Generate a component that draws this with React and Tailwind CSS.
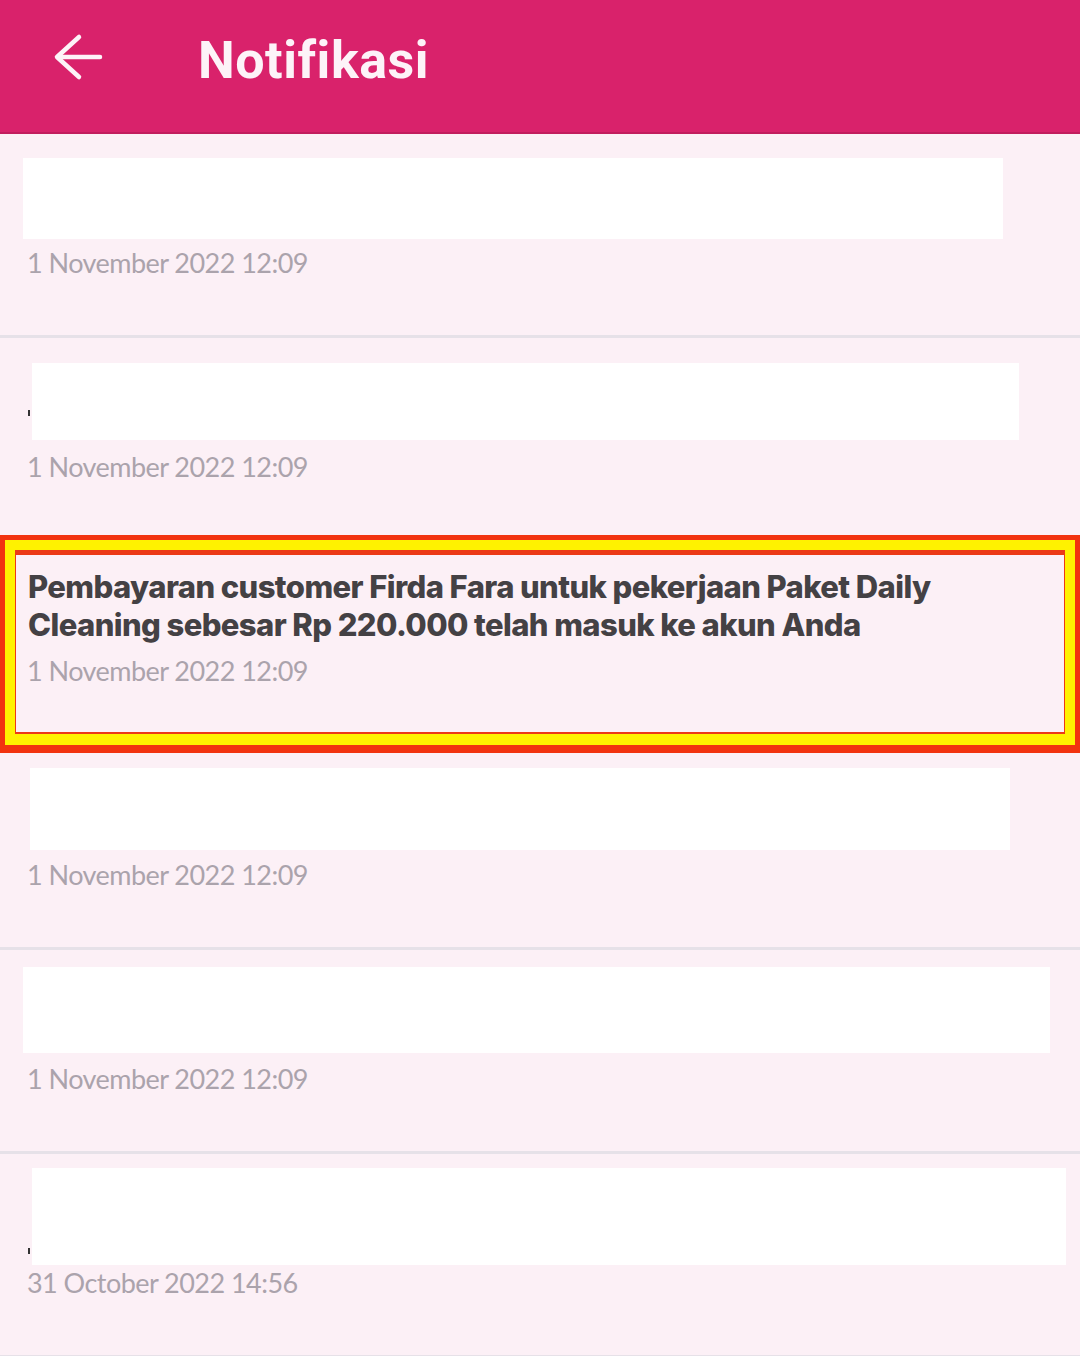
import { useState } from "react";

const items = [
  { date: "1 November 2022 12:09", mask: "mt-[-2px] ml-[-5px] w-[980px] h-[81px]" },
  { date: "1 November 2022 12:09", mask: "mt-[-1px] ml-[2px] w-[987px] h-[77px]", nub: "mt-[46px]" },
  { date: "1 November 2022 12:09", highlight: true },
  { date: "1 November 2022 12:09", mask: "mt-[-4px] ml-[2px] w-[980px] h-[82px]" },
  { date: "1 November 2022 12:09", mask: "mt-[-9px] ml-[-5px] w-[1027px] h-[86px]" },
  { date: "31 October 2022 14:56", mask: "mt-[-12px] ml-[2px] w-[1034px] h-[97px]", nub: "mt-[68px]" },
];

const BackArrow = () => (
  <svg width="50" height="48" viewBox="0 0 50 48" fill="none" stroke="currentColor" strokeWidth="4.5" strokeLinecap="round" strokeLinejoin="round">
    <path d="M47 24H5" />
    <path d="M26 4 4 24l22 20" />
  </svg>
);

const NotifItem = ({ item }) => {
  return (
    <div className="relative h-[204px] border-b-[3px] border-[#e6e1e8] pl-[28px] pt-[26px]">
      {item.highlight && (
        <div className="absolute left-0 right-0 top-[-7px] bottom-[-10px] border-x-[5px] border-t-[5px] border-b-[8px] border-[#f2330f] pointer-events-none">
          <div className="h-full border-[10px] border-b-[11px] border-[#fff200]">
            <div className="h-full border-t-[5px] border-b-[2px] border-x-[1px] border-[#ec3a17]" />
          </div>
        </div>
      )}
      <div className="h-[76px]">
        {item.highlight ? (
          <p className="text-[31px] leading-[38px] font-extrabold tracking-[-0.019em] text-[#444144] font-['Inter',sans-serif] pr-[110px]">
            Pembayaran customer Firda Fara untuk pekerjaan Paket Daily Cleaning sebesar Rp 220.000 telah masuk ke akun Anda
          </p>
        ) : (
          <div className="flex">
            {item.nub && <div className={`${item.nub} w-[2px] h-[6px] bg-[#333] shrink-0`} />}
            <div className={`${item.mask} bg-white`} />
          </div>
        )}
      </div>
      <p className="mt-[9px] ml-[-1px] text-[27px] leading-[36px] text-[#aba3ac] font-['Lato',sans-serif] tracking-[-0.02em]">
        {item.date}
      </p>
    </div>
  );
};

export default function App() {
  const [list] = useState(items);
  return (
    <div className="w-[1080px] min-h-[1356px] bg-[#fcf0f6] overflow-hidden">
      <header className="h-[134px] bg-[#d9226b] border-b-2 border-[#c21d5e] flex items-start">
        <div className="mt-[33px] ml-[53px] text-[#fdf3f8]">
          <BackArrow />
        </div>
        <h1 className="mt-[35px] ml-[95px] text-[52px] leading-[52px] font-bold tracking-[0.01em] text-[#fdf3f8] font-['Roboto',sans-serif]">
          Notifikasi
        </h1>
      </header>
      <div className="flex flex-col">
        {list.map((item, i) => (
          <NotifItem key={i} item={item} />
        ))}
      </div>
    </div>
  );
}
